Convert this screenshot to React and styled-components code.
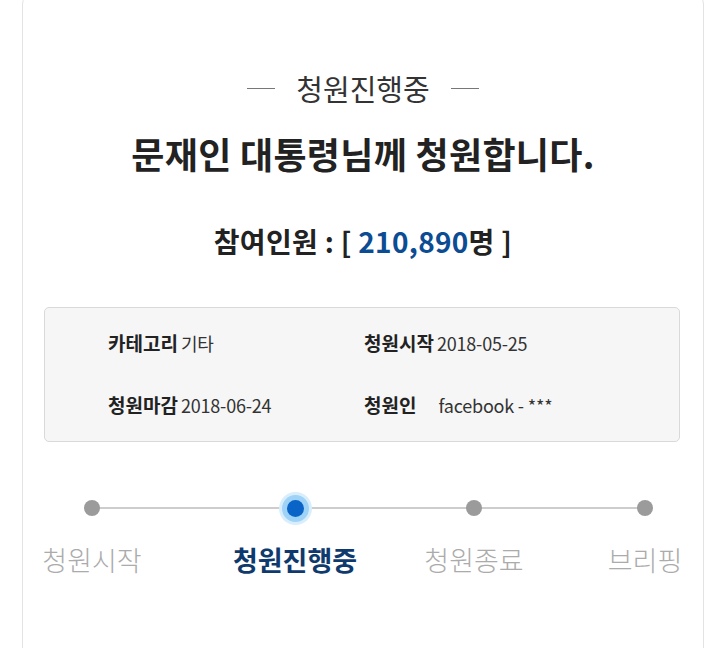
import React from "react";
import styled, { createGlobalStyle } from "styled-components";

const Global = createGlobalStyle`
  html, body { margin: 0; padding: 0; background: #fff; }
  body { font-family: "Noto Sans CJK KR", "Noto Sans", sans-serif; color: #333; overflow: hidden; }
  * { box-sizing: border-box; }
`;

const Page = styled.div`
  width: 720px;
  height: 648px;
  overflow: hidden;
`;

const Card = styled.div`
  margin: -6px 0 0 22px;
  width: 682px;
  height: 700px;
  border: 1px solid #e3e3e3;
  border-radius: 10px;
  background: #fff;
  padding-top: 75px;
  display: flex;
  flex-direction: column;
  align-items: stretch;
`;

const Status = styled.div`
  display: flex;
  justify-content: center;
  align-items: center;
  gap: 21px;
  font-size: 29px;
  line-height: 36px;
  color: #333;
  font-weight: 400;
`;

const Dash = styled.span`
  display: block;
  width: 28px;
  height: 1px;
  background: #777;
`;

const Title = styled.h1`
  margin: 25px 0 0;
  text-align: center;
  font-size: 36px;
  line-height: 44px;
  font-weight: 700;
  color: #222;
  letter-spacing: 0.3px;
`;

const Count = styled.div`
  margin-top: 48px;
  text-align: center;
  font-size: 28px;
  line-height: 36px;
  font-weight: 700;
  color: #222;
  letter-spacing: 0.3px;
`;

const Num = styled.span`
  color: #0b4c93;
`;

const InfoBox = styled.div`
  margin: 48px 23px 0 21px;
  height: 135px;
  border: 1px solid #d9d9d9;
  border-radius: 5px;
  background: #f6f6f6;
  padding: 22px 0 0 63px;
  display: grid;
  grid-template-columns: 256px 1fr;
  grid-template-rows: 26px 26px;
  row-gap: 36px;
`;

const Item = styled.div`
  font-size: 18px;
  line-height: 26px;
  color: #333;
  letter-spacing: -0.2px;
  white-space: nowrap;
`;

const Label = styled.b`
  font-size: 19px;
  font-weight: 700;
  color: #222;
  letter-spacing: 0;
  margin-right: ${(p) => p.$gap || 3}px;
`;

const Steps = styled.div`
  position: relative;
  margin-top: 50px;
  display: flex;
  &::before {
    content: "";
    position: absolute;
    left: 69px;
    width: 553px;
    top: 15px;
    height: 2px;
    background: #cdcdcd;
  }
`;

const Step = styled.div`
  position: relative;
  width: 110px;
  margin-left: ${(p) => p.$offset}px;
  display: flex;
  flex-direction: column;
  align-items: center;
`;

const DotWrap = styled.div`
  height: 32px;
  display: flex;
  align-items: center;
  justify-content: center;
`;

const Dot = styled.span`
  display: block;
  width: ${(p) => (p.$active ? 17 : 16)}px;
  height: ${(p) => (p.$active ? 17 : 16)}px;
  border-radius: 50%;
  background: ${(p) => (p.$active ? "#0a63c6" : "#9b9b9b")};
  box-shadow: ${(p) =>
    p.$active ? "0 0 0 5px #9fd2f7, 0 0 0 8px #d9eefc" : "none"};
`;

const StepLabel = styled.div`
  margin-top: 19px;
  font-size: 27px;
  line-height: 34px;
  white-space: nowrap;
  font-weight: ${(p) => (p.$active ? 700 : 300)};
  color: ${(p) => (p.$active ? "#0f3a6d" : "#ababab")};
`;

const steps = [
  { label: "청원시작", offset: 14 },
  { label: "청원진행중", offset: 93, active: true },
  { label: "청원종료", offset: 69 },
  { label: "브리핑", offset: 61 },
];

export default function App() {
  return (
    <Page>
      <Global />
      <Card>
        <Status>
          <Dash />
          <span>청원진행중</span>
          <Dash />
        </Status>
        <Title>문재인 대통령님께 청원합니다.</Title>
        <Count>
          참여인원 : [ <Num>210,890</Num>명 ]
        </Count>
        <InfoBox>
          <Item>
            <Label>카테고리</Label>기타
          </Item>
          <Item>
            <Label>청원시작</Label>2018-05-25
          </Item>
          <Item>
            <Label>청원마감</Label>2018-06-24
          </Item>
          <Item>
            <Label $gap={22}>청원인</Label>facebook - ***
          </Item>
        </InfoBox>
        <Steps>
          {steps.map((s) => (
            <Step key={s.label} $offset={s.offset}>
              <DotWrap>
                <Dot $active={s.active} />
              </DotWrap>
              <StepLabel $active={s.active}>{s.label}</StepLabel>
            </Step>
          ))}
        </Steps>
      </Card>
    </Page>
  );
}
